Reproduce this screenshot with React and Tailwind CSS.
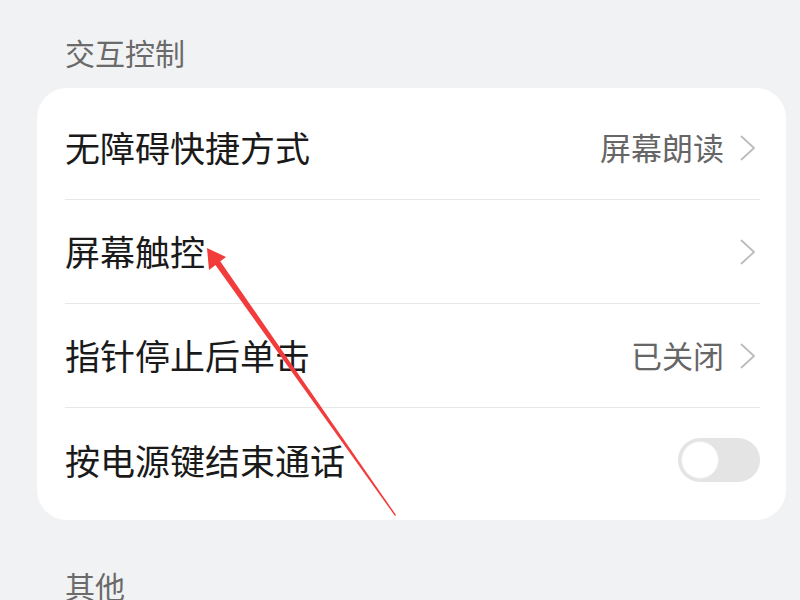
const rows = [
  { title: '无障碍快捷方式', value: '屏幕朗读', chevron: true },
  { title: '屏幕触控', chevron: true },
  { title: '指针停止后单击', value: '已关闭', chevron: true },
  { title: '按电源键结束通话', toggle: true },
]

function Chevron() {
  return (
    <svg width="16" height="26" viewBox="0 0 16 26" className="mr-[4px]">
      <polyline points="1.5,1.5 14,13 1.5,24.5" fill="none" stroke="#bcbcbc" strokeWidth="1.8" strokeLinecap="round" strokeLinejoin="round" />
    </svg>
  )
}

function Toggle() {
  return (
    <div className="w-[82px] h-[44px] rounded-full bg-[#e4e4e4] p-[3px] flex items-center">
      <div className="w-[38px] h-[38px] rounded-full bg-white border border-[#ececec]" />
    </div>
  )
}

function Arrow() {
  return (
    <svg className="absolute inset-0 pointer-events-none" width="800" height="600" viewBox="0 0 800 600">
      <polygon points="219,259.5 214,263 395,516 396,515" fill="#f23b3b" />
      <polygon points="207,248 226,257 209,270" fill="#f23b3b" />
    </svg>
  )
}

export default function App() {
  return (
    <div
      className="relative min-h-screen h-[600px] overflow-hidden bg-[#f1f2f4] pl-[37px] pr-[14px] pt-[30px]"
      style={{ fontFamily: '"Noto Sans CJK SC", "Noto Sans", sans-serif' }}
    >
      <div className="h-[44px] leading-[44px] pl-[28px] mb-[14px] text-[30px] text-[#6a6a6a]">交互控制</div>
      <div className="bg-white rounded-[30px] py-2">
        {rows.map((r, i) => (
          <div
            key={r.title}
            className={
              'flex items-center h-[104px] ml-[28px] mr-[26px] ' +
              (i < rows.length - 1 ? 'border-b border-[#e8e8e8]' : '')
            }
          >
            <span className="flex-1 text-[35px] text-[#1a1a1a]">{r.title}</span>
            {r.value && <span className="text-[31px] text-[#666666] mr-[16px]">{r.value}</span>}
            {r.chevron && <Chevron />}
            {r.toggle && <Toggle />}
          </div>
        ))}
      </div>
      <div className="h-[44px] leading-[44px] pl-[28px] mt-[43px] text-[30px] text-[#6a6a6a]">其他</div>
      <Arrow />
    </div>
  )
}
